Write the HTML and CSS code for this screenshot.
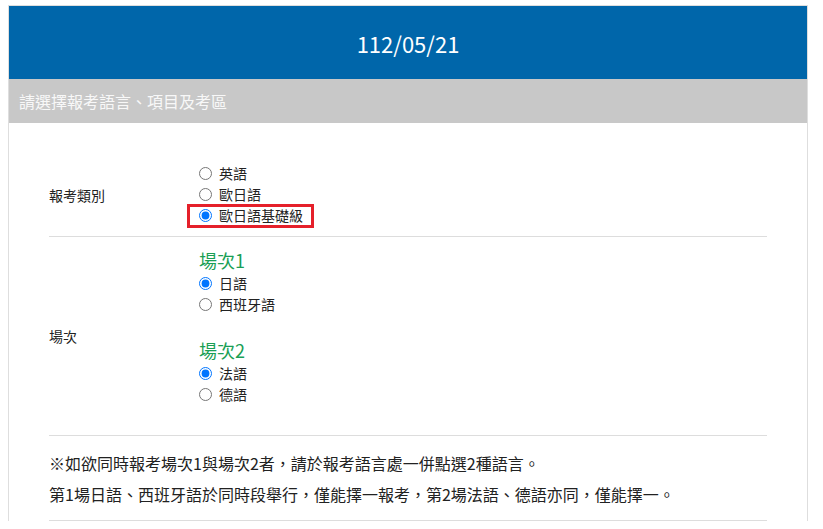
FILE: index.html
```html
<!DOCTYPE html>
<html>
  <head>
    <title>報名</title>
    <meta charset="utf-8">
    <link rel="stylesheet" href="styles.css">
  </head>
  <body>
    <div class="panel">
      <div class="panel-head">112/05/21</div>
      <div class="panel-sub">請選擇報考語言、項目及考區</div>
      <div class="panel-body">
        <div class="form-row">
          <div class="form-label">報考類別</div>
          <div class="form-value">
            <label class="opt"><input type="radio" name="kind" />英語</label>
            <label class="opt"><input type="radio" name="kind" />歐日語</label>
            <label class="opt opt-mark"><input type="radio" name="kind" checked />歐日語基礎級</label>
          </div>
        </div>
        <div class="form-row">
          <div class="form-label">場次</div>
          <div class="form-value">
            <div class="group">
              <div class="group-title">場次1</div>
              <label class="opt"><input type="radio" name="s1" checked />日語</label>
              <label class="opt"><input type="radio" name="s1" />西班牙語</label>
            </div>
            <div class="group">
              <div class="group-title">場次2</div>
              <label class="opt"><input type="radio" name="s2" checked />法語</label>
              <label class="opt"><input type="radio" name="s2" />德語</label>
            </div>
          </div>
        </div>
        <div class="note">
          <p>※如欲同時報考場次1與場次2者，請於報考語言處一併點選2種語言。</p>
          <p>第1場日語、西班牙語於同時段舉行，僅能擇一報考，第2場法語、德語亦同，僅能擇一。</p>
        </div>
      </div>
    </div>
  </body>
</html>
```
FILE: styles.css
```css
body {
  margin: 0;
  font-family: "Noto Sans CJK TC", "Noto Sans", sans-serif;
  color: #222;
}

.panel {
  box-sizing: border-box;
  width: 800px;
  margin: 5px 0 0 8px;
  border: 1px solid #dedede;
  border-bottom: none;
}
.panel-head {
  height: 73px;
  display: flex;
  align-items: center;
  justify-content: center;
  background: #0066aa;
  color: #fff;
  font-size: 22px;
}
.panel-sub {
  height: 44px;
  line-height: 44px;
  padding-left: 10px;
  background: #c8c8c8;
  color: #f8f8f8;
  font-size: 16px;
}
.panel-body {
  padding: 30px 40px 0;
}

.form-row {
  display: flex;
  align-items: center;
  padding: 10px 0;
  border-bottom: 1px solid #dddddd;
  font-size: 14px;
}
.form-label {
  width: 145px;
  flex-shrink: 0;
}
.opt {
  display: flex;
  align-items: center;
  height: 21px;
  line-height: 21px;
}
.opt input {
  width: 13px;
  height: 13px;
  margin: 0 7px 0 5px;
}
.opt-mark {
  position: relative;
  align-self: flex-start;
}
.opt-mark::after {
  content: "";
  position: absolute;
  top: -1px;
  bottom: -2px;
  left: -7px;
  right: -11px;
  border: 3px solid #e5202a;
}

.form-value {
  display: flex;
  flex-direction: column;
}
.group + .group {
  margin-top: 22px;
}
.group:last-child {
  margin-bottom: 20px;
}
.group-title {
  height: 26px;
  line-height: 26px;
  padding-left: 5px;
  color: #1a9f55;
  font-size: 18px;
}

.note {
  padding: 15px 0 14px;
  border-bottom: 1px solid #dddddd;
  font-size: 16px;
}
.note p {
  margin: 0;
  line-height: 24px;
}
.note p + p {
  margin-top: 7px;
}
```
